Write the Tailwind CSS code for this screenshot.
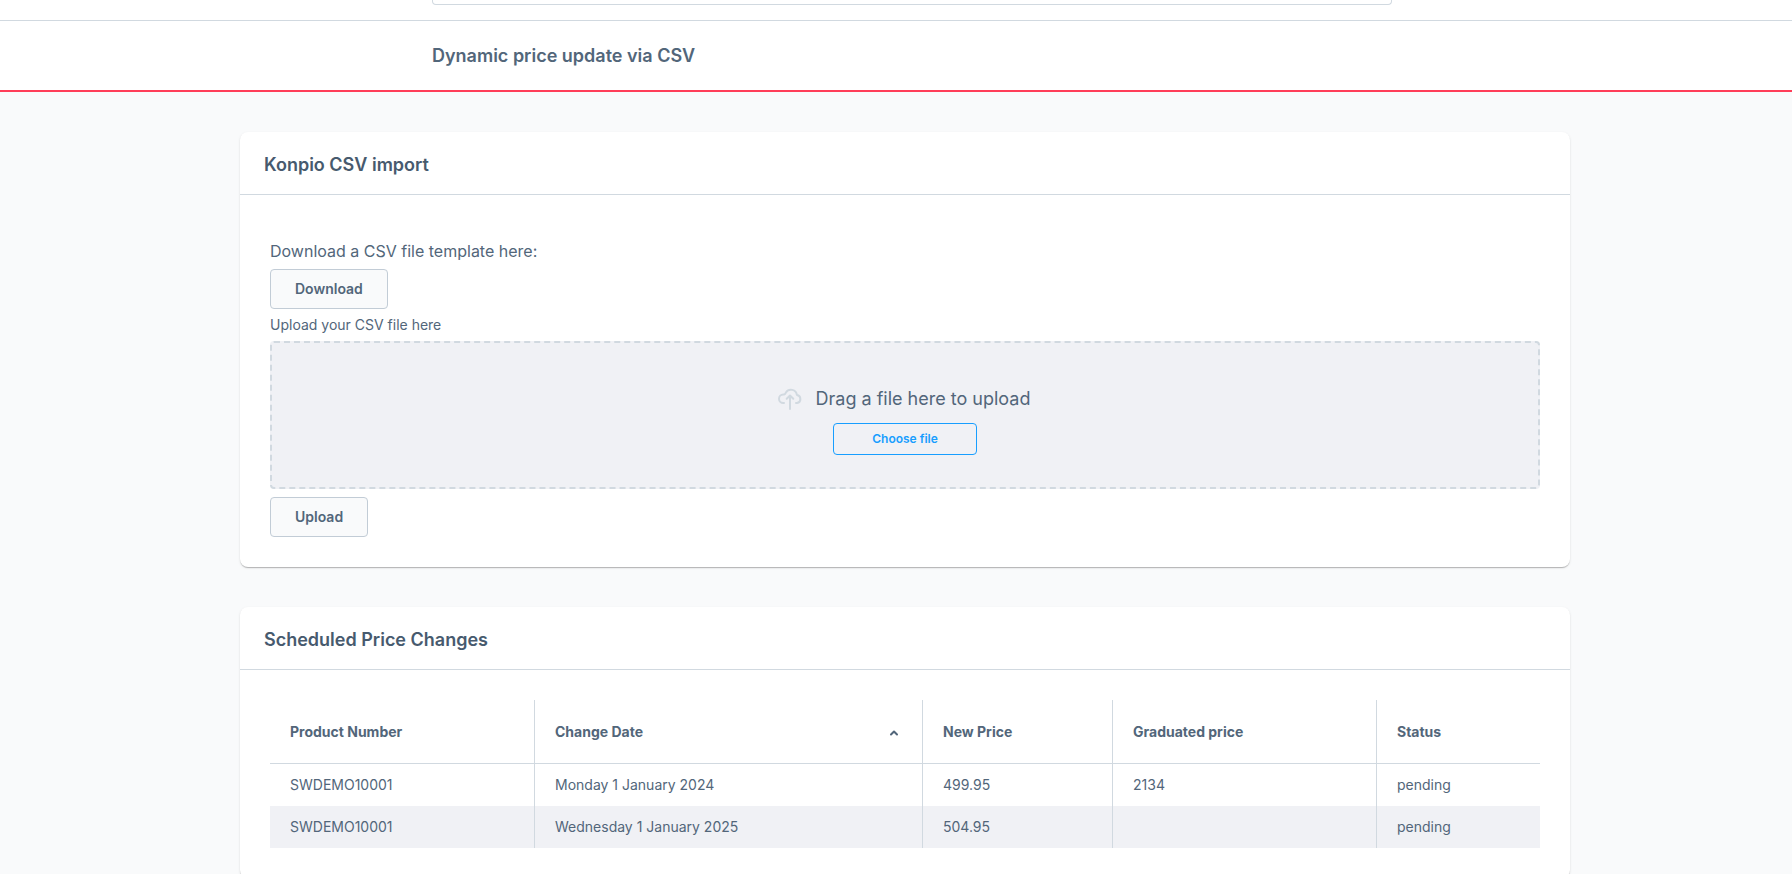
<!DOCTYPE html>
<html lang="en">
<head>
<meta charset="utf-8">
<meta name="viewport" content="width=device-width, initial-scale=1">
<title>Dynamic price update via CSV</title>
<script src="https://cdn.jsdelivr.net/npm/@tailwindcss/browser@4"></script>
</head>
<body class="min-h-screen overflow-x-hidden bg-[#f9fafb] font-['Inter',sans-serif] text-sm text-[#52667a] antialiased">
<header class="bg-white">
  <div class="h-[21px] border-b border-[#d1d9e0] pl-8">
    <div class="mx-auto h-[5px] max-w-[960px] rounded-b border border-t-0 border-[#d1d9e0]"></div>
  </div>
  <div class="border-b-2 border-[#ff3d58] pl-8">
    <div class="mx-auto flex h-[69px] max-w-[960px] items-center">
      <h1 class="text-lg font-semibold">Dynamic price update via CSV</h1>
    </div>
  </div>
</header>
<main class="py-10 pl-[18px]">
  <div class="mx-auto flex max-w-[1330px] flex-col gap-10">
    <section class="rounded-lg bg-white shadow-[0_1px_1px_rgba(0,0,0,0.14),0_2px_1px_-1px_rgba(0,0,0,0.12),0_1px_3px_rgba(0,0,0,0.08)]">
      <h2 class="flex h-[63px] items-center border-b border-[#d1d9e0] px-6 pt-1 text-lg font-semibold text-[#475a6e]">Konpio CSV import</h2>
      <div class="p-[30px]">
        <p class="pt-2.5 pb-0.5 text-base leading-8">Download a CSV file template here:</p>
        <button type="button" class="block h-10 rounded border border-[#c2ccd6] bg-[#f9fafb] px-6 text-sm font-semibold">Download</button>
        <label for="csv-file" class="block py-1.5 leading-5">Upload your CSV file here</label>
        <div class="flex h-[148px] flex-col items-center justify-center gap-2.5 rounded border-2 border-dashed border-[#d1d9e0] bg-[#f0f1f5] pt-2.5">
          <div class="flex items-center gap-3.5 pr-0.5">
            <svg class="size-6 text-[#d1d9e0]" viewBox="0 0 24 24" fill="none" stroke="currentColor" stroke-width="2" stroke-linecap="round" stroke-linejoin="round" aria-hidden="true"><path d="M6 16H5.300A4.300 4.300 0 0 1 5.300 7.400H6.200Q7.500 7.200 7.900 5.500A6 6 0 0 1 18.900 8A4.050 4.050 0 0 1 19 16H18"/><path d="M12 22V8.500M8.700 11.800 12 8.500l3.300 3.300"/></svg>
            <span class="text-lg">Drag a file here to upload</span>
          </div>
          <button id="csv-file" type="button" class="h-8 w-36 rounded border border-[#189eff] text-xs font-semibold text-[#189eff]">Choose file</button>
        </div>
        <button type="button" class="mt-2 block h-10 rounded border border-[#c2ccd6] bg-[#f9fafb] px-6 text-sm font-semibold">Upload</button>
      </div>
    </section>
    <section class="rounded-lg bg-white shadow-[0_1px_1px_rgba(0,0,0,0.14),0_2px_1px_-1px_rgba(0,0,0,0.12),0_1px_3px_rgba(0,0,0,0.08)]">
      <h2 class="flex h-[63px] items-center border-b border-[#d1d9e0] px-6 pt-1 text-lg font-semibold text-[#475a6e]">Scheduled Price Changes</h2>
      <div class="p-[30px]">
        <table class="w-full table-fixed border-separate border-spacing-0 text-left">
          <colgroup><col class="w-[265px]"><col><col class="w-[190px]"><col class="w-[264px]"><col class="w-[163px]"></colgroup>
          <thead>
            <tr class="h-16 *:border-b *:border-[#d1d9e0] *:px-5 *:font-bold *:not-last:border-r">
              <th scope="col">Product Number</th>
              <th scope="col" aria-sort="ascending"><span class="flex items-center justify-between">Change Date<svg class="mr-[3px] h-4 w-2.5" viewBox="0 0 10 16" fill="none" stroke="currentColor" stroke-width="2" stroke-linecap="round" stroke-linejoin="round" aria-hidden="true"><path d="M2 10.500l3-3 3 3"/></svg></span></th>
              <th scope="col">New Price</th>
              <th scope="col">Graduated price</th>
              <th scope="col">Status</th>
            </tr>
          </thead>
          <tbody>
            <tr class="h-[42px] *:border-[#d1d9e0] *:px-5 *:not-last:border-r">
              <td>SWDEMO10001</td><td>Monday 1 January 2024</td><td>499.95</td><td>2134</td><td>pending</td>
            </tr>
            <tr class="h-[42px] bg-[#f0f1f5] *:border-[#d1d9e0] *:px-5 *:not-last:border-r">
              <td>SWDEMO10001</td><td>Wednesday 1 January 2025</td><td>504.95</td><td></td><td>pending</td>
            </tr>
          </tbody>
        </table>
      </div>
    </section>
  </div>
</main>
</body>
</html>
